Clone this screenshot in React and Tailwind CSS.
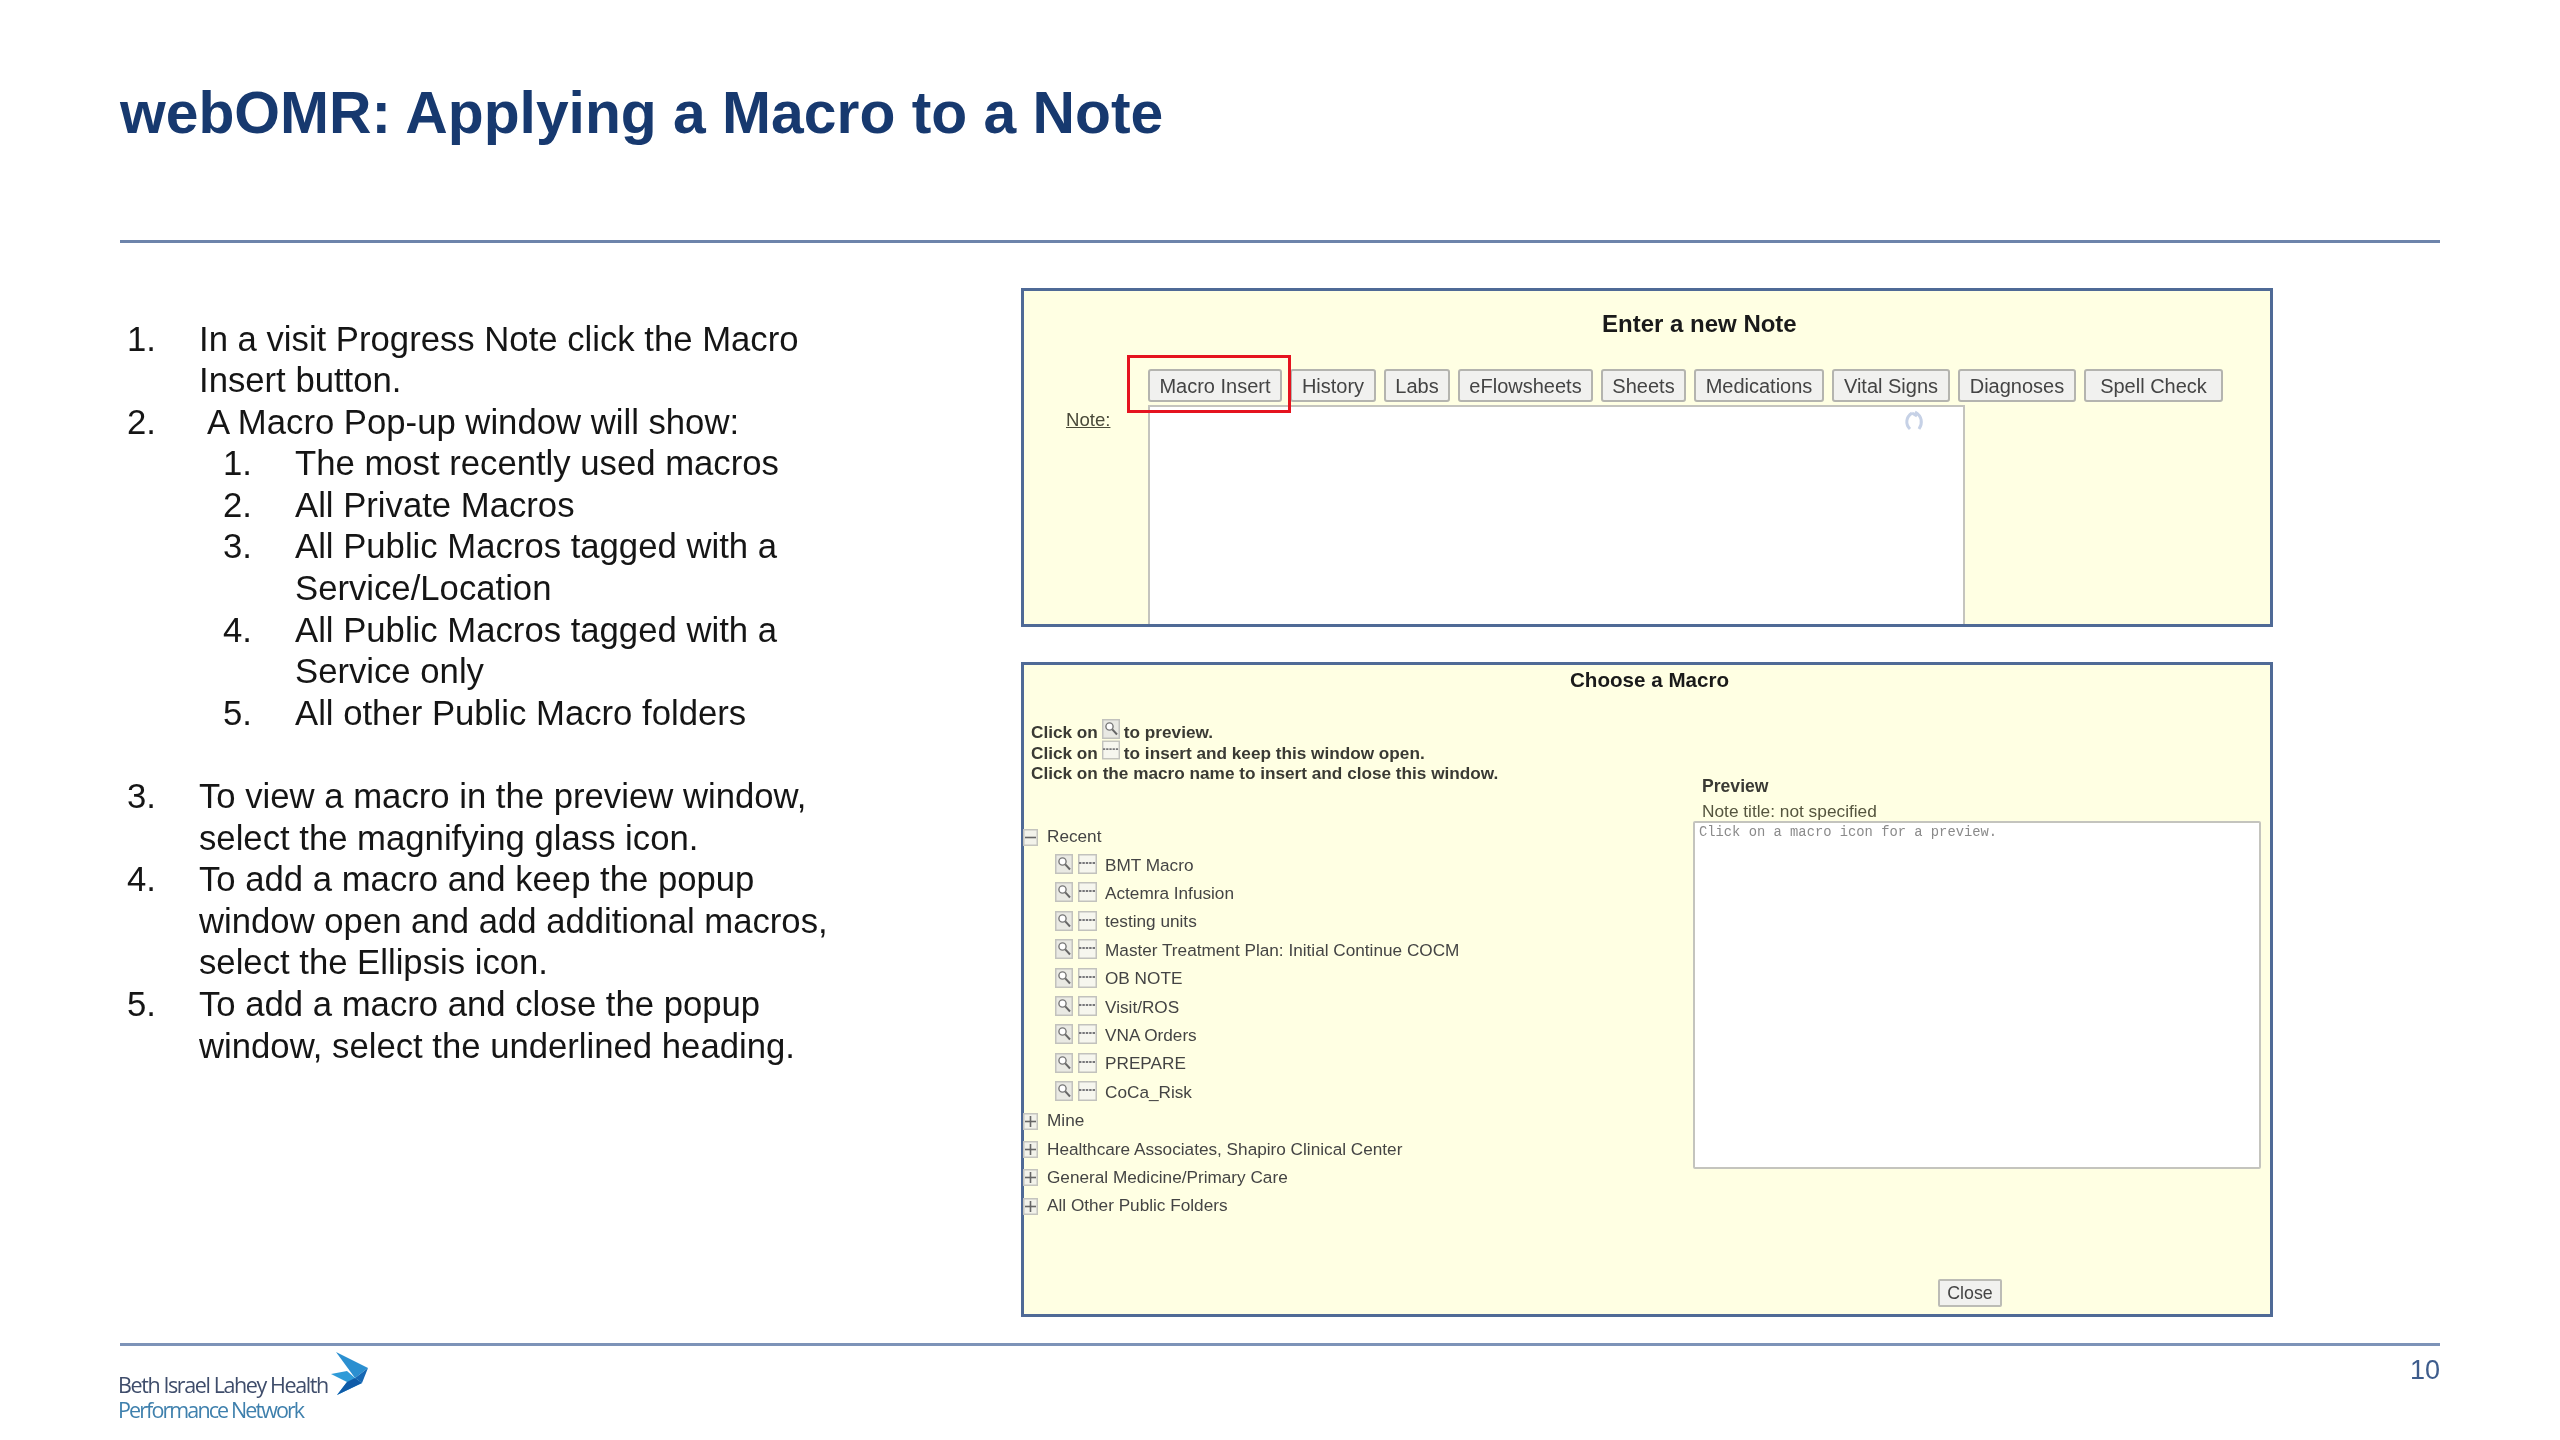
import React from "react";

const toolbar = [
  { label: "Macro Insert", w: "w-[134px]" },
  { label: "History", w: "w-[86px]" },
  { label: "Labs", w: "w-[66px]" },
  { label: "eFlowsheets", w: "w-[135px]" },
  { label: "Sheets", w: "w-[85px]" },
  { label: "Medications", w: "w-[130px]" },
  { label: "Vital Signs", w: "w-[118px]" },
  { label: "Diagnoses", w: "w-[118px]" },
  { label: "Spell Check", w: "w-[139px]" },
];

const recent = ["BMT Macro", "Actemra Infusion", "testing units", "Master Treatment Plan: Initial Continue COCM", "OB NOTE", "Visit/ROS", "VNA Orders", "PREPARE", "CoCa_Risk"];
const folders = ["Mine", "Healthcare Associates, Shapiro Clinical Center", "General Medicine/Primary Care", "All Other Public Folders"];

function MagnifierIcon({ className }) {
  return (
    <svg className={className} viewBox="0 0 18 20" fill="none">
      <rect x="0.75" y="0.75" width="16.5" height="18.5" fill="#e9e9e3" stroke="#c2c2bd" strokeWidth="1.5" />
      <circle cx="7.5" cy="7.5" r="3.6" fill="#fff" stroke="#777" strokeWidth="1.4" />
      <path d="M10.3 10.3 L15 15.5" stroke="#666" strokeWidth="2" />
    </svg>
  );
}

function EllipsisIcon({ className }) {
  return (
    <svg className={className} viewBox="0 0 19 20" fill="none">
      <rect x="0.75" y="0.75" width="17.5" height="18.5" fill="#f6f6ee" stroke="#c2c2bd" strokeWidth="1.5" />
      <path d="M1 9 H18" stroke="#77777a" strokeWidth="1.8" strokeDasharray="2.4 1" />
    </svg>
  );
}

function TreeToggle({ open }) {
  return (
    <svg className="w-[15px] h-[17px] shrink-0" viewBox="0 0 15 17" fill="none">
      <rect x="0.75" y="0.75" width="13.5" height="15.5" fill="#f2f2ea" stroke="#c4c4be" strokeWidth="1.5" />
      <path d="M2 8.5 H13" stroke="#666" strokeWidth="1.6" />
      {!open && <path d="M7.5 3 V14" stroke="#666" strokeWidth="1.6" />}
    </svg>
  );
}

function BirdLogo() {
  return (
    <svg className="w-[37px] h-[43px] shrink-0" viewBox="0 0 37 43" fill="none">
      <path d="M5 0 L37 16 L24 26 Z" fill="#2b8fd0" />
      <path d="M37 16 L31 31 L24 26 Z" fill="#1668b4" />
      <path d="M0 22 L16 19 L24 26 L31 31 L6 43 L16 30 Z" fill="#2f9bd8" />
      <path d="M24 26 L31 31 L6 43 L16 30 Z" fill="#0f5ba8" />
    </svg>
  );
}

function NumberedRow({ n, indent = "", children }) {
  return (
    <div className="flex">
      <span className="w-[72px] shrink-0">{n}.</span>
      <span className={indent}>{children}</span>
    </div>
  );
}

function SubRow({ n, children }) {
  return (
    <div className="flex pl-[96px]">
      <span className="w-[72px] shrink-0">{n}.</span>
      <span>{children}</span>
    </div>
  );
}

function NotePanel() {
  return (
    <section className="relative h-[339px] border-[3px] border-[#4f6a96] bg-[#ffffe3] flex flex-col text-[#3a3a3a] blur-[0.6px]">
      <div className="h-[66px] flex items-center pl-[578px] text-[24px] font-bold text-[#1a1a1a]">Enter a new Note</div>
      <div className="mt-[12px] flex gap-[8px] pl-[124px]">
        {toolbar.map((b) => (
          <button key={b.label} type="button" className={`${b.w} h-[33px] flex items-center justify-center rounded-[3px] border-2 border-[#b4b4af] bg-[#f1f1ef] text-[20px] text-[#444]`}>
            {b.label}
          </button>
        ))}
      </div>
      <div className="mt-[3px] flex flex-1 min-h-0">
        <div className="w-[124px] shrink-0 pl-[42px] pt-[1px] text-[18.6px] underline text-[#4a4a3a]">Note:</div>
        <div className="relative w-[817px] border-2 border-b-0 border-[#c4c4be] bg-white">
          <svg className="absolute right-[38px] top-[3px] w-[22px] h-[22px]" viewBox="0 0 22 22" fill="none" stroke="#c6d1e6" strokeWidth="3">
            <path d="M9 3 C3 7 2 14 7 19" />
            <path d="M12 2 C19 6 20 13 16 19" />
            <path d="M9 3 L14 6" />
          </svg>
        </div>
      </div>
      <div className="absolute left-[103px] top-[64px] w-[164px] h-[58px] border-[3px] border-[#e5131f]" />
    </section>
  );
}

function MacroPanel() {
  return (
    <section className="mt-[35px] h-[655px] border-[3px] border-[#4f6a96] bg-[#ffffe3] flex flex-col text-[#444] blur-[0.6px]">
      <div className="h-[30px] flex items-center pl-[546px] text-[20.6px] font-bold text-[#1a1a1a]">Choose a Macro</div>
      <div className="flex flex-1 min-h-0">
        <div className="w-[669px] shrink-0">
          <div className="pl-[7px] pt-[27px] text-[17.2px] font-bold leading-[20.5px] text-[#3a3a34]">
            <div className="flex items-center gap-[4px]">Click on <MagnifierIcon className="w-[18px] h-[20px] -mt-[6px]" /> to preview.</div>
            <div className="flex items-center gap-[4px]">Click on <EllipsisIcon className="w-[18px] h-[20px] -mt-[6px]" /> to insert and keep this window open.</div>
            <div>Click on the macro name to insert and close this window.</div>
          </div>
          <div className="mt-[39.5px] text-[17.2px]">
            <div className="h-[28.4px] flex items-center gap-[9px] -ml-px"><TreeToggle open /><span>Recent</span></div>
            {recent.map((name) => (
              <div key={name} className="h-[28.4px] flex items-center pl-[31px]">
                <MagnifierIcon className="w-[18px] h-[20px] -mt-[3px]" />
                <EllipsisIcon className="ml-[5px] w-[19px] h-[20px] -mt-[3px]" />
                <span className="ml-[8px]">{name}</span>
              </div>
            ))}
            {folders.map((name) => (
              <div key={name} className="h-[28.4px] flex items-center gap-[9px] -ml-px"><TreeToggle /><span>{name}</span></div>
            ))}
          </div>
        </div>
        <div className="w-[568px] flex flex-col">
          <div className="pl-[9px] pt-[80px] text-[17.6px] font-bold leading-[22px] text-[#3a3a34]">Preview</div>
          <div className="pl-[9px] mt-[4px] text-[17.3px] leading-[20px] text-[#55553f]">Note title: not specified</div>
          <div className="h-[348px] rounded-[2px] border-2 border-[#c4c4be] bg-white pl-[4px] pt-[1px] font-['Liberation_Mono',monospace] text-[13.8px] leading-[18px] text-[#8a8a8a]">
            Click on a macro icon for a preview.
          </div>
          <button type="button" className="mt-[110px] ml-[245px] w-[64px] h-[28px] flex items-center justify-center rounded-[2px] border-2 border-[#bcbcb6] bg-[#f1f1ef] text-[17.8px] text-[#444]">Close</button>
        </div>
      </div>
    </section>
  );
}

export default function App() {
  return (
    <div className="relative w-[2560px] h-[1440px] bg-white overflow-hidden font-['Liberation_Sans',Arial,sans-serif] blur-[0.5px]">
      <header className="mx-[120px] h-[243px] border-b-[3px] border-[#6d84ab] pt-[73px]">
        <h1 className="text-[58.8px] leading-[80px] font-bold text-[#17396f]">webOMR: Applying a Macro to a Note</h1>
      </header>

      <main className="h-[1101px] flex pt-[45px]">
        <div className="w-[1021px] shrink-0 pl-[127px] pt-[30.5px] text-[34.7px] leading-[41.6px] text-[#151515]">
          <NumberedRow n={1}>In a visit Progress Note click the Macro<br />Insert button.</NumberedRow>
          <NumberedRow n={2} indent="pl-[8px]">A Macro Pop-up window will show:</NumberedRow>
          <SubRow n={1}>The most recently used macros</SubRow>
          <SubRow n={2}>All Private Macros</SubRow>
          <SubRow n={3}>All Public Macros tagged with a<br />Service/Location</SubRow>
          <SubRow n={4}>All Public Macros tagged with a<br />Service only</SubRow>
          <SubRow n={5}>All other Public Macro folders</SubRow>
          <div className="h-[41.6px]" />
          <NumberedRow n={3}>To view a macro in the preview window,<br />select the magnifying glass icon.</NumberedRow>
          <NumberedRow n={4}>To add a macro and keep the popup<br />window open and add additional macros,<br />select the Ellipsis icon.</NumberedRow>
          <NumberedRow n={5}>To add a macro and close the popup<br />window, select the underlined heading.</NumberedRow>
        </div>
        <div className="w-[1252px]">
          <NotePanel />
          <MacroPanel />
        </div>
      </main>

      <footer className="absolute left-0 top-[1343px] w-[2560px] px-[120px]">
        <div className="border-t-[3px] border-[#7d93b8] flex justify-between">
          <div className="pt-[6px] flex -ml-[2px]">
            <div className="pt-[20px] font-['Open_Sans',sans-serif] text-[21.5px] leading-[25px] tracking-[-1.4px]">
              <div className="text-[#3f4d6b]">Beth Israel Lahey Health</div>
              <div className="text-[#3f80ad] tracking-[-1.9px]">Performance Network</div>
            </div>
            <div className="ml-[3px]"><BirdLogo /></div>
          </div>
          <div className="pt-[8px] text-[27px] leading-[32px] text-[#3d5c8c]">10</div>
        </div>
      </footer>
    </div>
  );
}
